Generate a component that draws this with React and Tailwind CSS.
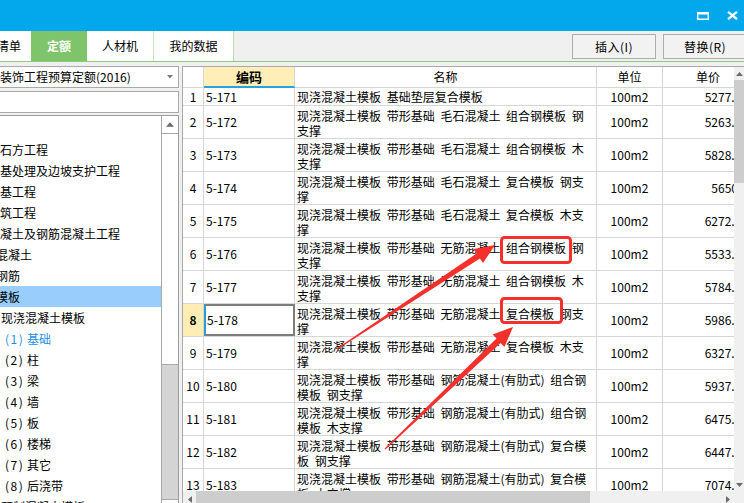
import React from "react";

const FONT = "font-['Noto_Sans_CJK_SC','Noto_Sans',sans-serif]";

const tree = [
  { text: "", cls: "" },
  { text: "土石方工程", cls: "ml-[-12px]" },
  { text: "地基处理及边坡支护工程", cls: "ml-[-12px]" },
  { text: "桩基工程", cls: "ml-[-12px]" },
  { text: "砌筑工程", cls: "ml-[-12px]" },
  { text: "混凝土及钢筋混凝土工程", cls: "ml-[-12px]" },
  { text: "混凝土", cls: "ml-[-4px]" },
  { text: "钢筋", cls: "ml-[-4px]" },
  { text: "模板", cls: "ml-[-4px]", selected: true },
  { text: "现浇混凝土模板", cls: "ml-[1px]" },
  { num: "(1)", text: "基础", blue: true },
  { num: "(2)", text: "柱" },
  { num: "(3)", text: "梁" },
  { num: "(4)", text: "墙" },
  { num: "(5)", text: "板" },
  { num: "(6)", text: "楼梯" },
  { num: "(7)", text: "其它" },
  { num: "(8)", text: "后浇带" },
  { text: "预制混凝土模板", cls: "ml-[1px]" },
];

const rows = [
  ["5-171", ["现浇混凝土模板 基础垫层复合模板"], "5277.38"],
  ["5-172", ["现浇混凝土模板 带形基础 毛石混凝土 组合钢模板 钢", "支撑"], "5263.12"],
  ["5-173", ["现浇混凝土模板 带形基础 毛石混凝土 组合钢模板 木", "支撑"], "5828.45"],
  ["5-174", ["现浇混凝土模板 带形基础 毛石混凝土 复合模板 钢支", "撑"], "5650.9"],
  ["5-175", ["现浇混凝土模板 带形基础 毛石混凝土 复合模板 木支", "撑"], "6272.36"],
  ["5-176", ["现浇混凝土模板 带形基础 无筋混凝土 组合钢模板 钢", "支撑"], "5533.21"],
  ["5-177", ["现浇混凝土模板 带形基础 无筋混凝土 组合钢模板 木", "支撑"], "5784.67"],
  ["5-178", ["现浇混凝土模板 带形基础 无筋混凝土 复合模板 钢支", "撑"], "5986.04"],
  ["5-179", ["现浇混凝土模板 带形基础 无筋混凝土 复合模板 木支", "撑"], "6327.51"],
  ["5-180", ["现浇混凝土模板 带形基础 钢筋混凝土(有肋式) 组合钢", "模板 钢支撑"], "5937.29"],
  ["5-181", ["现浇混凝土模板 带形基础 钢筋混凝土(有肋式) 组合钢", "模板 木支撑"], "6475.83"],
  ["5-182", ["现浇混凝土模板 带形基础 钢筋混凝土(有肋式) 复合模", "板 钢支撑"], "6447.18"],
  ["5-183", ["现浇混凝土模板 带形基础 钢筋混凝土(有肋式) 复合模", "板 木支撑"], "7074.62"],
];

// tapered arrow polygon, tail -> tip
function arrowPoints(x1, y1, x2, y2) {
  const len = Math.hypot(x2 - x1, y2 - y1);
  const dx = (x2 - x1) / len;
  const dy = (y2 - y1) / len;
  const px = -dy;
  const py = dx;
  const headLen = 20;
  const bx = x2 - dx * headLen;
  const by = y2 - dy * headLen;
  const p = (x, y, w) => [x + px * w, y + py * w];
  const pts = [
    p(x1, y1, 0.6),
    p(bx, by, 3),
    p(bx, by, 8.5),
    [x2, y2],
    p(bx, by, -8.5),
    p(bx, by, -3),
    p(x1, y1, -0.6),
  ];
  return pts.map((q) => q.map((v) => v.toFixed(1)).join(",")).join(" ");
}

function Tri({ dir, className }) {
  const pts = {
    up: "0,4 3.5,0 7,4",
    down: "0,0 7,0 3.5,4",
    left: "4,0 4,7 0,3.5",
    right: "0,0 0,7 4,3.5",
  }[dir];
  const vb = dir === "up" || dir === "down" ? "0 0 7 4" : "0 0 4 7";
  return (
    <svg viewBox={vb} className={className}>
      <polygon points={pts} fill="#6b6b6b" />
    </svg>
  );
}

function TreeRow({ item }) {
  return (
    <div
      className={`h-[21px] flex items-center whitespace-nowrap ${
        item.selected ? "bg-[#99cdfb]" : ""
      } ${item.blue ? "text-[#1c8fe6]" : "text-black"}`}
    >
      {item.num ? (
        <>
          <span className="ml-[5px] inline-block w-[22px] tracking-[1.5px]">{item.num}</span>
          <span>{item.text}</span>
        </>
      ) : (
        <span className={item.cls}>{item.text}</span>
      )}
    </div>
  );
}

function GridRow({ idx, row }) {
  const [code, name, price] = row;
  const single = name.length === 1;
  const sel = idx === 8;
  return (
    <div className={`flex shrink-0 border-b border-[#d6d6d6] ${single ? "h-[18px]" : "h-[33px]"}`}>
      <div
        className={`w-[21px] shrink-0 border-r border-[#d6d6d6] flex items-center justify-center ${
          sel ? "bg-[#ffedb4] font-bold" : "bg-white"
        }`}
      >
        {idx}
      </div>
      {sel ? (
        <div className="w-[91px] shrink-0 border-2 border-[#7d7d7d] border-l-[#2b9bd8] flex items-center pl-[1px]">
          {code}
        </div>
      ) : (
        <div className="w-[91px] shrink-0 border-r border-[#d6d6d6] flex items-center pl-[2px]">{code}</div>
      )}
      <div
        className={`w-[302px] shrink-0 border-r border-[#d6d6d6] pl-[2px] leading-[15px] whitespace-nowrap overflow-hidden [word-spacing:3px] ${
          single ? "flex items-center" : "pt-[2px]"
        }`}
      >
        {name.map((l, i) => (
          <div key={i}>{l}</div>
        ))}
      </div>
      <div className="w-[66px] shrink-0 border-r border-[#d6d6d6] flex items-center justify-center">100m2</div>
      <div className="w-[87px] shrink-0 flex items-center justify-end pr-[2px]">{price}</div>
    </div>
  );
}

export default function App() {
  return (
    <div className={`relative w-[744px] h-[503px] overflow-hidden bg-[#f0f0f0] text-[12px] text-black ${FONT}`}>
      {/* title bar */}
      <div className="h-[31px] bg-[#02a7ec] flex items-center justify-end pr-[6px] gap-[18px]">
        <svg width="12" height="8" viewBox="0 0 12 8">
          <rect x="0.75" y="0.75" width="10.5" height="6.5" fill="none" stroke="white" strokeWidth="1.5" />
          <rect x="0" y="0" width="12" height="2.5" fill="white" />
        </svg>
        <svg width="11" height="9" viewBox="0 0 11 9">
          <path d="M1 0.8 L10 8.2 M10 0.8 L1 8.2" stroke="white" strokeWidth="2.2" />
        </svg>
      </div>

      {/* tab bar */}
      <div className="h-[31px] flex border-b border-[#8cca7c] whitespace-nowrap">
        <div className="w-[31px] shrink-0 bg-white overflow-hidden flex items-center">
          <span className="ml-[-3px]">清单</span>
        </div>
        <div className="w-[56px] shrink-0 bg-[#7dc46b] text-white font-bold flex items-center justify-center">定额</div>
        <div className="w-[67px] shrink-0 bg-white border-r border-[#c4e6b8] flex items-center justify-center">人材机</div>
        <div className="w-[80px] shrink-0 bg-white border-r border-[#b6dfa8] flex items-center justify-center">我的数据</div>
        <div className="ml-[338px] flex gap-[7px] pt-[3px] pb-[2px] shrink-0">
          <button className="w-[84px] shrink-0 border border-[#adadad] bg-[#f2f2f2] flex items-center justify-center tracking-[0.5px]">插入(I)</button>
          <button className="w-[84px] shrink-0 border border-[#adadad] bg-[#f2f2f2] flex items-center justify-center tracking-[0.5px]">替换(R)</button>
        </div>
      </div>

      {/* main */}
      <div className="flex h-[441px]">
        {/* left panel */}
        <div className="w-[179px] shrink-0 flex flex-col pt-[4px]">
          <div className="h-[22px] shrink-0 bg-white border-y border-r border-[#a9a9a9] flex items-center justify-between whitespace-nowrap overflow-hidden">
            <span>装饰工程预算定额(2016)</span>
            <svg width="6" height="4" viewBox="0 0 6 4" className="mr-[5px]">
              <polygon points="0,0 6,0 3,3.5" fill="#7a7a7a" />
            </svg>
          </div>
          <div className="h-[22px] shrink-0 mt-[3px] bg-white border-y border-r border-[#a9a9a9]" />
          <div className="flex-1 min-h-0 mt-[2px] bg-white border-t border-r border-[#9c9c9c] flex overflow-hidden">
            <div className="flex-1 pt-[2px] overflow-hidden">
              {tree.map((it, i) => (
                <TreeRow key={i} item={it} />
              ))}
            </div>
            <div className="w-[17px] shrink-0 border-l border-[#a9a9a9] flex flex-col">
              <div className="h-[18px] shrink-0 border-b border-[#a9a9a9] flex items-center justify-center">
                <Tri dir="up" className="w-[8px] h-[5px]" />
              </div>
              <div className="h-[231px] shrink-0 border-b border-[#a9a9a9] bg-white" />
              <div className="h-[134px] shrink-0 bg-[#d4d4d4]" />
              <div className="h-[18px] shrink-0 border-t border-[#a9a9a9] bg-white" />
            </div>
          </div>
        </div>

        <div className="w-[3px] shrink-0" />

        {/* grid */}
        <div className="flex-1 min-w-0 mt-[4px] border-t border-l border-[#a9a9a9] bg-white flex flex-col">
          <div className="h-[424px] shrink-0 flex">
            <div className="flex-1 min-w-0 overflow-hidden flex flex-col">
              {/* header */}
              <div className="flex h-[21px] shrink-0">
                <div className="w-[21px] shrink-0 border-r border-b border-[#d6d6d6]" />
                <div className="w-[91px] shrink-0 bg-[#ffefb7] border-b-2 border-[#2aa0dc] border-r border-r-[#d6d6d6] flex items-center justify-center font-bold text-[13px]">
                  编码
                </div>
                <div className="w-[302px] shrink-0 border-r border-b border-[#d6d6d6] flex items-center justify-center">名称</div>
                <div className="w-[66px] shrink-0 border-r border-b border-[#d6d6d6] flex items-center justify-center">单位</div>
                <div className="w-[87px] shrink-0 border-b border-[#d6d6d6] flex items-center justify-end pr-[30px]">单价</div>
              </div>
              {rows.map((r, i) => (
                <GridRow key={i} idx={i + 1} row={r} />
              ))}
            </div>
            {/* vertical scrollbar */}
            <div className="w-[10px] shrink-0 flex flex-col bg-[#f0f0f0]">
              <div className="h-[13px] shrink-0 flex items-center justify-start pl-[2px]">
                <Tri dir="up" className="w-[7px] h-[4px]" />
              </div>
              <div className="h-[103px] shrink-0 bg-[#cdcdcd]" />
              <div className="flex-1" />
              <div className="h-[13px] shrink-0 flex items-center justify-start pl-[2px]">
                <Tri dir="down" className="w-[7px] h-[4px]" />
              </div>
            </div>
          </div>
          {/* horizontal scrollbar */}
          <div className="h-[17px] shrink-0 flex bg-[#f0f0f0]">
            <div className="w-[13px] shrink-0 flex items-center justify-center">
              <Tri dir="left" className="w-[4px] h-[7px]" />
            </div>
            <div className="w-[394px] shrink-0 bg-[#cdcdcd]" />
            <div className="w-[131px] shrink-0" />
            <div className="w-[13px] shrink-0 flex items-center justify-center">
              <Tri dir="right" className="w-[4px] h-[7px]" />
            </div>
            <div className="flex-1 bg-[#f0f0f0]" />
          </div>
        </div>
      </div>

      {/* annotations */}
      <svg className="absolute inset-0 pointer-events-none" width="744" height="503" viewBox="0 0 744 503">
        <rect x="501.5" y="237.5" width="69" height="25" rx="3" fill="none" stroke="#f3302b" strokeWidth="3" />
        <rect x="501.5" y="298.5" width="60" height="24" rx="3" fill="none" stroke="#f3302b" strokeWidth="3" />
        <polygon points={arrowPoints(337, 349, 495, 245)} fill="#f3302b" />
        <polygon points={arrowPoints(385, 449, 513, 327)} fill="#f3302b" />
      </svg>
    </div>
  );
}
